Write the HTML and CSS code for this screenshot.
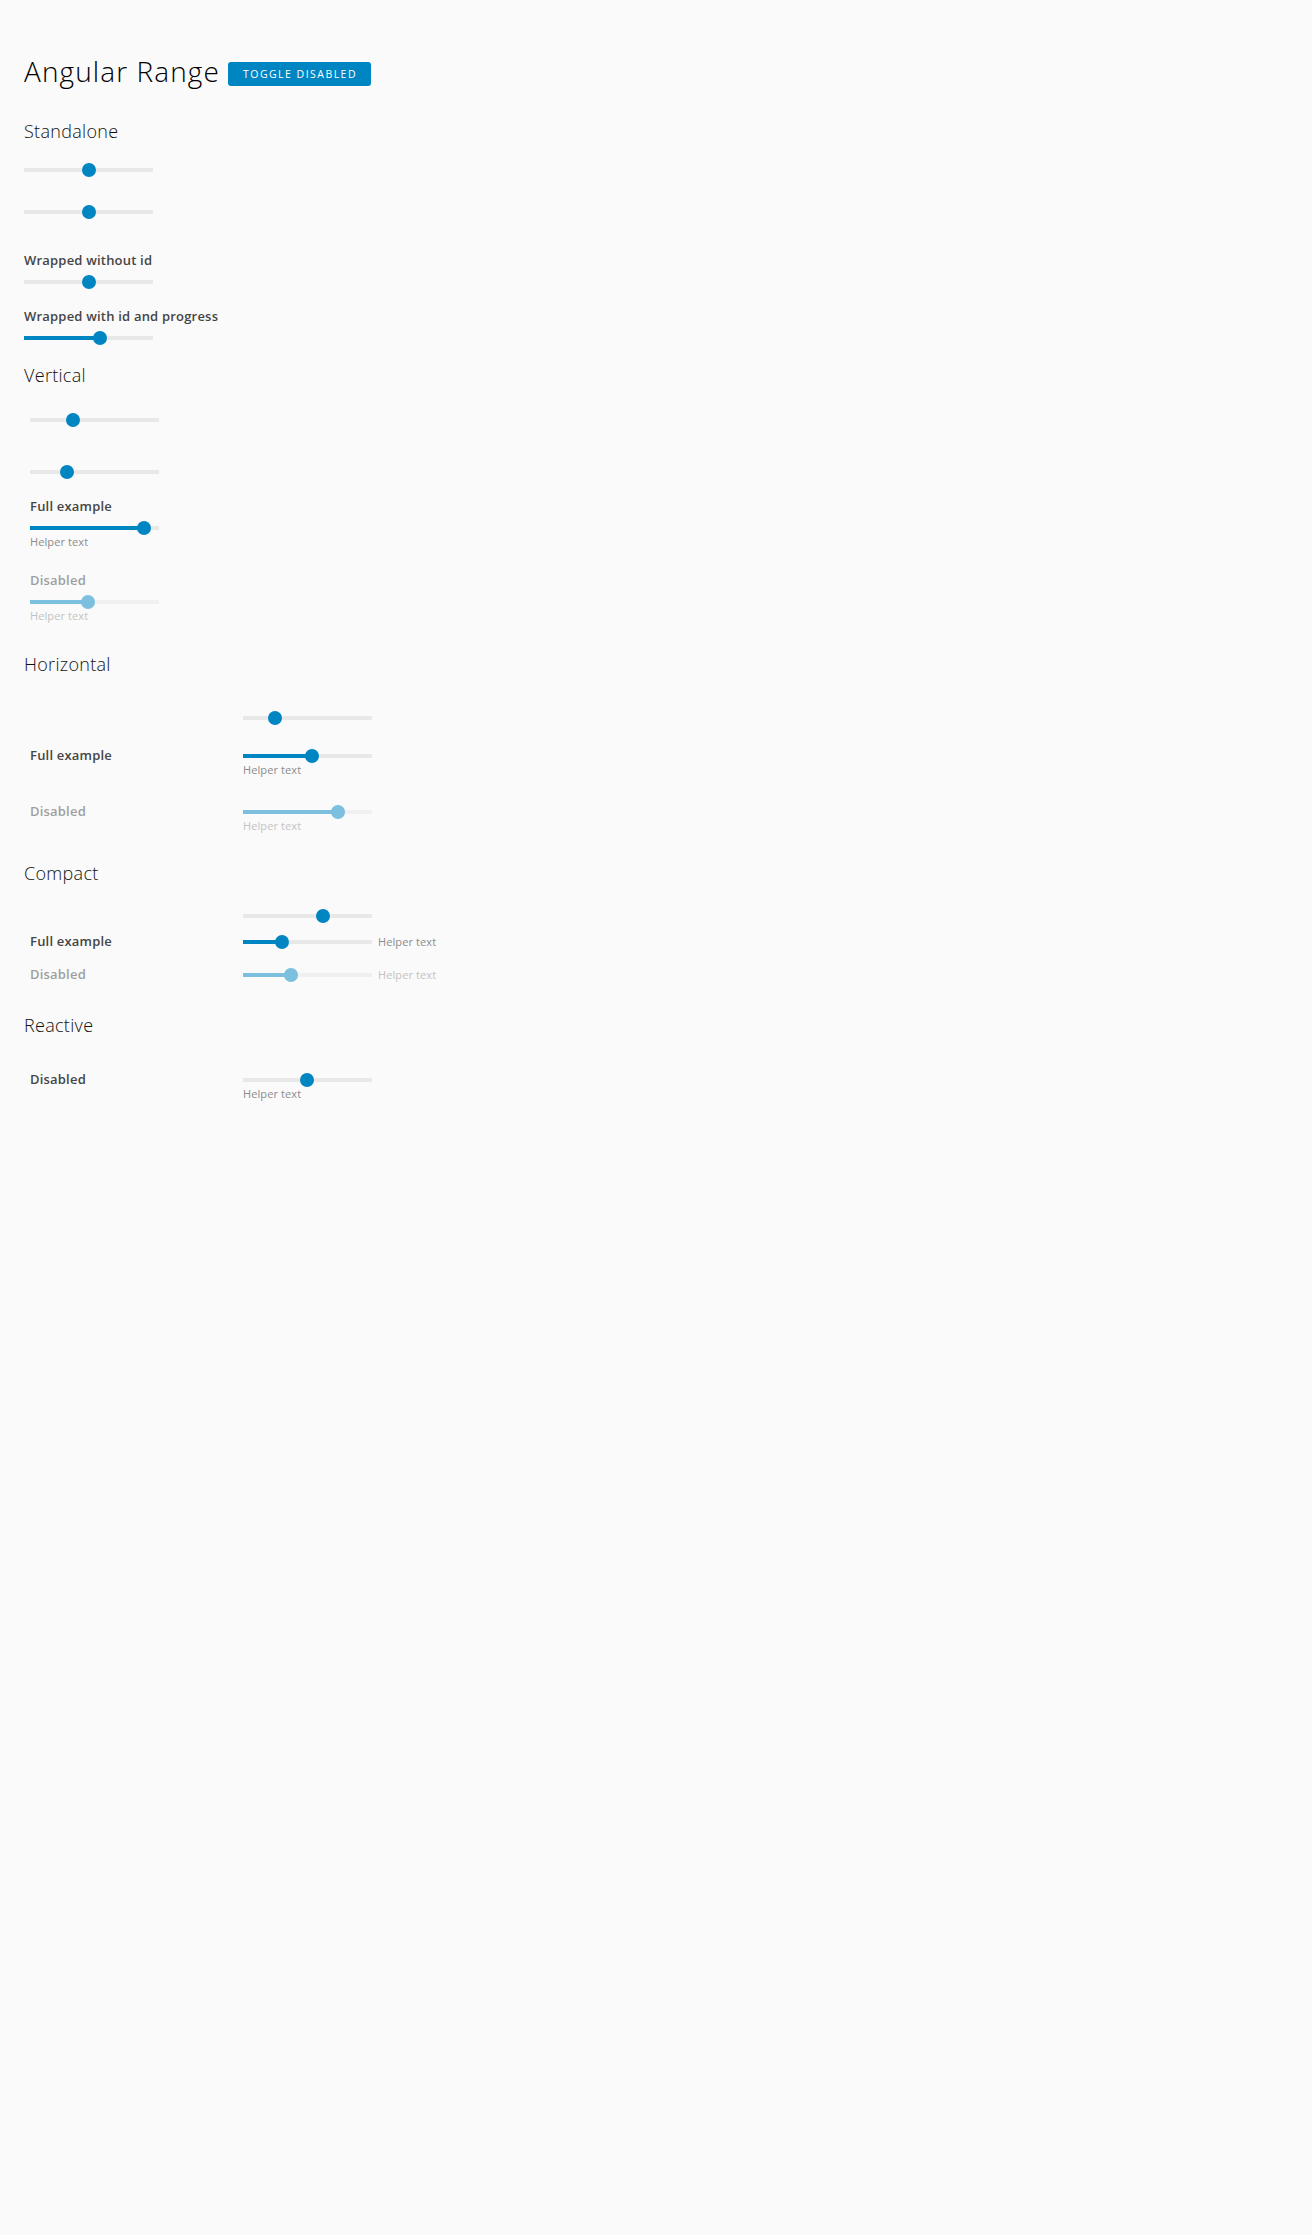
FILE: index.html
```html
<!DOCTYPE html>
<html lang="en">
<head>
<meta charset="utf-8">
<title>Angular Range</title>
<link rel="stylesheet" href="styles.css">
</head>
<body>
<main class="page">
  <header class="title-row">
    <h1 class="title">Angular Range</h1>
    <button class="btn" type="button">Toggle disabled</button>
  </header>

  <section class="demo demo-standalone">
    <h2 class="demo-title">Standalone</h2>
    <div class="range s1"><div class="track"><span class="thumb" style="left:65px"></span></div></div>
    <div class="range s2"><div class="track"><span class="thumb" style="left:65px"></span></div></div>
    <div class="field f-wrap1">
      <label class="label">Wrapped without id</label>
      <div class="range"><div class="track"><span class="thumb" style="left:65px"></span></div></div>
    </div>
    <div class="field f-wrap2">
      <label class="label">Wrapped with id and progress</label>
      <div class="range"><div class="track"><div class="fill" style="width:76px"></div><span class="thumb" style="left:76px"></span></div></div>
    </div>
  </section>

  <section class="demo demo-vertical">
    <h2 class="demo-title">Vertical</h2>
    <div class="form-v">
      <div class="range v1"><div class="track"><span class="thumb" style="left:43px"></span></div></div>
      <div class="range v2"><div class="track"><span class="thumb" style="left:37px"></span></div></div>
      <div class="field v-full">
        <label class="label">Full example</label>
        <div class="range"><div class="track"><div class="fill" style="width:114px"></div><span class="thumb" style="left:114px"></span></div></div>
        <div class="helper">Helper text</div>
      </div>
      <div class="field v-dis is-disabled">
        <label class="label">Disabled</label>
        <div class="range"><div class="track"><div class="fill" style="width:58px"></div><span class="thumb" style="left:58px"></span></div></div>
        <div class="helper">Helper text</div>
      </div>
    </div>
  </section>

  <section class="demo demo-horizontal">
    <h2 class="demo-title">Horizontal</h2>
    <div class="form-h">
      <div class="row h1r">
        <span class="label"></span>
        <div class="control">
          <div class="range"><div class="track"><span class="thumb" style="left:32px"></span></div></div>
        </div>
      </div>
      <div class="row h-full">
        <label class="label">Full example</label>
        <div class="control">
          <div class="range"><div class="track"><div class="fill" style="width:69px"></div><span class="thumb" style="left:69px"></span></div></div>
          <div class="helper">Helper text</div>
        </div>
      </div>
      <div class="row h-dis is-disabled">
        <label class="label">Disabled</label>
        <div class="control">
          <div class="range"><div class="track"><div class="fill" style="width:95px"></div><span class="thumb" style="left:95px"></span></div></div>
          <div class="helper">Helper text</div>
        </div>
      </div>
    </div>
  </section>

  <section class="demo demo-compact">
    <h2 class="demo-title">Compact</h2>
    <div class="form-h form-compact">
      <div class="row c1">
        <span class="label"></span>
        <div class="control inline">
          <div class="range"><div class="track"><span class="thumb" style="left:80px"></span></div></div>
        </div>
      </div>
      <div class="row c-full">
        <label class="label">Full example</label>
        <div class="control inline">
          <div class="range"><div class="track"><div class="fill" style="width:39px"></div><span class="thumb" style="left:39px"></span></div></div>
          <div class="helper">Helper text</div>
        </div>
      </div>
      <div class="row c-dis is-disabled">
        <label class="label">Disabled</label>
        <div class="control inline">
          <div class="range"><div class="track"><div class="fill" style="width:48px"></div><span class="thumb" style="left:48px"></span></div></div>
          <div class="helper">Helper text</div>
        </div>
      </div>
    </div>
  </section>

  <section class="demo demo-reactive">
    <h2 class="demo-title">Reactive</h2>
    <div class="form-h">
      <div class="row r-dis">
        <label class="label">Disabled</label>
        <div class="control">
          <div class="range"><div class="track"><span class="thumb" style="left:64px"></span></div></div>
          <div class="helper">Helper text</div>
        </div>
      </div>
    </div>
  </section>
</main>
</body>
</html>
```

FILE: styles.css
```css
html, body {
  margin: 0;
  padding: 0;
  background: #fafafa;
}

body {
  font-family: "Open Sans", Lato, "Liberation Sans", sans-serif;
  color: #454545;
}

.page {
  padding: 53px 24px 40px 24px;
}

/* Title */
.title-row {
  display: flex;
  align-items: flex-start;
  gap: 8px;
}

.title {
  margin: 0;
  font-size: 28px;
  line-height: 36px;
  font-weight: 300;
  color: #000;
  letter-spacing: 1.1px;
}

.btn {
  margin-top: 9px;
  height: 24px;
  padding: 0 14px 0 15px;
  border: none;
  border-radius: 3px;
  background: #0085c3;
  color: #fff;
  font-family: inherit;
  font-size: 10.5px;
  font-weight: 500;
  letter-spacing: 0.14em;
  text-transform: uppercase;
  cursor: pointer;
}

/* Section titles */
.demo-title {
  margin: 0;
  font-size: 18px;
  line-height: 24px;
  font-weight: 300;
  color: #111;
  letter-spacing: 0.3px;
}

.demo-standalone .demo-title { margin-top: 30px; }
.demo-vertical .demo-title { margin-top: 18px; }
.demo-horizontal .demo-title { margin-top: 29px; }
.demo-compact .demo-title { margin-top: 28px; }
.demo-reactive .demo-title { margin-top: 31px; }

/* Range */
.range {
  width: 129px;
  height: 14px;
  display: flex;
  align-items: center;
}

.track {
  position: relative;
  width: 100%;
  height: 4px;
  background: #e8e8e8;
}

.fill {
  height: 100%;
  background: #0085c3;
}

.thumb {
  position: absolute;
  top: 50%;
  width: 14px;
  height: 14px;
  margin: -7px 0 0 -7px;
  border-radius: 50%;
  background: #0085c3;
}

/* Labels / helper */
.label {
  display: block;
  font-size: 13px;
  line-height: 16px;
  font-weight: 600;
  color: #454545;
  letter-spacing: 0.2px;
}

.helper {
  font-size: 11px;
  line-height: 14px;
  color: #8c8c8c;
  letter-spacing: 0.1px;
}

.field .range { margin-top: 7px; }

.is-disabled { opacity: 0.5; }

/* Standalone spacing */
.s1 { margin-top: 20px; }
.s2 { margin-top: 28px; }
.f-wrap1 { margin-top: 33px; }
.f-wrap2 { margin-top: 19px; }

/* Vertical */
.form-v { padding-left: 6px; }
.v1 { margin-top: 26px; }
.v2 { margin-top: 38px; }
.v-full { margin-top: 19px; }
.v-dis { margin-top: 23px; }

/* Horizontal */
.form-h { padding-left: 6px; }

.row {
  display: grid;
  grid-template-columns: 213px auto;
  align-items: start;
}

.row .control { margin-top: 2px; }
.row .control.inline {
  display: flex;
  align-items: center;
  gap: 6px;
}

.h1r { margin-top: 35px; }
.h1r .control { margin-top: 0; }
.h-full { margin-top: 22px; }
.h-dis { margin-top: 26px; }

/* Compact */
.c1 { margin-top: 24px; }
.c1 .control { margin-top: 0; }
.c-full { margin-top: 10px; }
.c-dis { margin-top: 17px; }

/* Reactive */
.r-dis { margin-top: 34px; }
```
